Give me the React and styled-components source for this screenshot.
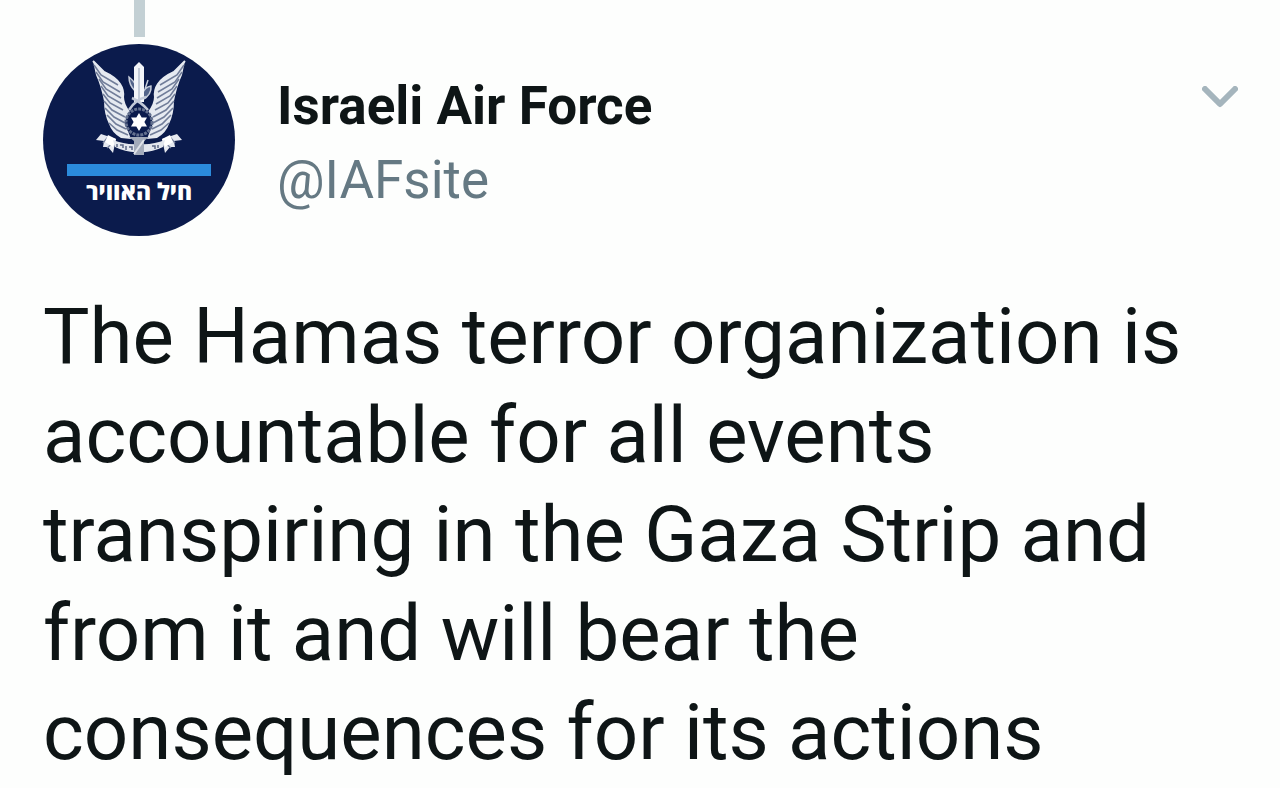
import React from 'react';
import styled, { createGlobalStyle } from 'styled-components';


const feathers = [
    'M51 21 L58 31 L75 41',
    'M53 28 L60 38 L77 48',
    'M56 35 L63 45 L78 54',
    'M58 42 L65 52 L79 60',
    'M60 50 L67 59 L80 66',
    'M61 57 L69 66 L82 73',
    'M62 64 L71 73 L82 79',
    'M64 71 L73 80 L83 85',
    'M66 79 L74 86 L85 91',
];

const Wing = () => (
    <g>
        <path
            d="M50 17 L61 28 Q72 33 77 40 Q81 46 80 53 Q80 60 86 68 L82 79 L88 95 L78 94 Q69 89 66 80 Q61 70 61 57 Q58 42 53 31 Z"
            fill="#e6eaf1"
        />
        {feathers.map(d => (
            <path key={d} d={d} fill="none" stroke="#717d99" strokeWidth="1.6" />
        ))}
        <path d="M50 17 L61 28 Q72 33 77 40 Q81 46 80 53 Q80 60 86 68" fill="none" stroke="#e6eaf1" strokeWidth="2" />
    </g>
);

const BannerEnd = () => (
    <g>
        <path d="M53 96 L58 90 L73 95 L70 109 L65 103 L60 103 L61 97 Z" fill="#e6e9f0" />
        <path d="M60 99 L65 93 M64 104 L71 98" stroke="#7a859f" strokeWidth="1.5" />
        <path d="M65 91 L73 95 L70 103 L62 98 Z" fill="#ffffff" />
    </g>
);

const Emblem = () => (
    <EmblemSvg viewBox="44 14 104 98" aria-hidden="true">
        <Wing />
        <g transform="translate(192 0) scale(-1 1)">
            <Wing />
        </g>
        <path d="M86 33 Q90 36 93 41 L92 47 Q86 41 86 33 Z M108 42 Q109 51 99 56 L99 50 Q102 43 108 42 Z M105 36 L102 45" fill="#53648a" stroke="#c6cdda" strokeWidth="1.5" />
        <path d="M91 58 L91 23 L96 18 L101 23 L101 58 Z" fill="#f3f5f9" />
        <path d="M96 24 V57" stroke="#b3bccc" strokeWidth="1.5" />
        <path d="M86 66 Q93 55 103 53 M89 54 Q98 58 105 66" fill="none" stroke="#c3cad9" strokeWidth="2.5" />
        <circle cx="96" cy="78" r="13" fill="#0b1b4c" stroke="#64718f" strokeWidth="3" strokeDasharray="3 1" />
        <path d="M96 69 L98.7 73.5 L104 73.5 L101.4 78 L104 82.5 L98.7 82.5 L96 87 L93.3 82.5 L88 82.5 L90.6 78 L88 73.5 L93.3 73.5 Z" fill="#ffffff" />
        <BannerEnd />
        <g transform="translate(192 0) scale(-1 1)">
            <BannerEnd />
        </g>
        <path d="M70 96 Q82 101 96 100 Q110 101 122 96 L120 103 Q108 109 96 108 Q84 109 72 103 Z" fill="#e3e7ee" />
        <path d="M74 100 v3 M77 101 h3 v3 M83 102 v4 M86 103 h3 v3 M109 102 h3 v3 M115 101 v3" fill="none" stroke="#5c6885" strokeWidth="1.5" />
        <path d="M86 93 H106 L101 97 V111 H91 V97 Z" fill="#a3abba" />
        <path d="M91 110 L101 96" stroke="#dfe3e9" strokeWidth="2" />
    </EmblemSvg>
);

const App = () => {
    return (
        <>
            <GlobalStyle />
            <Tweet>
                <Header>
                    <AvatarColumn>
                        <ThreadLine />
                        <Avatar>
                            <Emblem />
                            <Bar />
                            <AvatarText lang="he" dir="rtl">חיל האוויר</AvatarText>
                        </Avatar>
                    </AvatarColumn>
                    <Names>
                        <Name>Israeli Air Force</Name>
                        <Handle href="#IAFsite">@IAFsite</Handle>
                    </Names>
                    <MenuButton type="button" aria-label="More">
                        <svg width="36" height="22" viewBox="0 0 36 22" aria-hidden="true">
                            <path d="M3 3 L18 18 L33 3" fill="none" stroke="#a5b5bd" strokeWidth="6" strokeLinecap="round" strokeLinejoin="round" />
                        </svg>
                    </MenuButton>
                </Header>
                <Text>
                    The Hamas terror organization is accountable for all events transpiring in the Gaza Strip and from it and will bear the consequences for its actions
                </Text>
            </Tweet>
        </>
    )
};

export default App;

const GlobalStyle = createGlobalStyle`
* {
    box-sizing: border-box;
}
body {
    margin: 0;
    background: #fdfefd;
    font-family: Roboto, "Liberation Sans", sans-serif;
}
`;

const Tweet = styled.article`
padding: 0 42px 0 43px;
`;

const Header = styled.header`
display: flex;
align-items: flex-start;
`;

const AvatarColumn = styled.div`
display: flex;
flex-direction: column;
align-items: center;
gap: 7px;
`;

const ThreadLine = styled.div`
width: 11px;
height: 37px;
background: #c3d0d4;
`;

const Avatar = styled.div`
width: 192px;
height: 192px;
border-radius: 50%;
background: #0b1b4c;
display: flex;
flex-direction: column;
align-items: center;
padding-top: 14px;
`;

const EmblemSvg = styled.svg`
width: 104px;
height: 98px;
flex-shrink: 0;
`;

const Bar = styled.div`
width: 144px;
height: 12px;
margin-top: 8px;
background: #2b8bdc;
flex-shrink: 0;
`;

const AvatarText = styled.span`
margin-top: 1px;
font-family: "Open Sans", "DejaVu Sans", sans-serif;
font-size: 23px;
font-weight: 800;
line-height: 28px;
color: #ffffff;
white-space: nowrap;
`;

const Names = styled.div`
flex: 1;
display: flex;
flex-direction: column;
align-items: flex-start;
padding: 69px 0 0 42px;
`;

const Name = styled.h1`
margin: 0;
font-size: 53px;
font-weight: 700;
line-height: 74px;
color: #0e1516;
`;

const Handle = styled.a`
font-size: 53px;
line-height: 74px;
color: #657983;
text-decoration: none;
`;

const MenuButton = styled.button`
display: flex;
margin-top: 86px;
padding: 0;
border: none;
background: none;
cursor: pointer;
`;

const Text = styled.p`
margin: 51px 0 0;
font-size: 78px;
line-height: 99px;
color: #0e1516;
`;
